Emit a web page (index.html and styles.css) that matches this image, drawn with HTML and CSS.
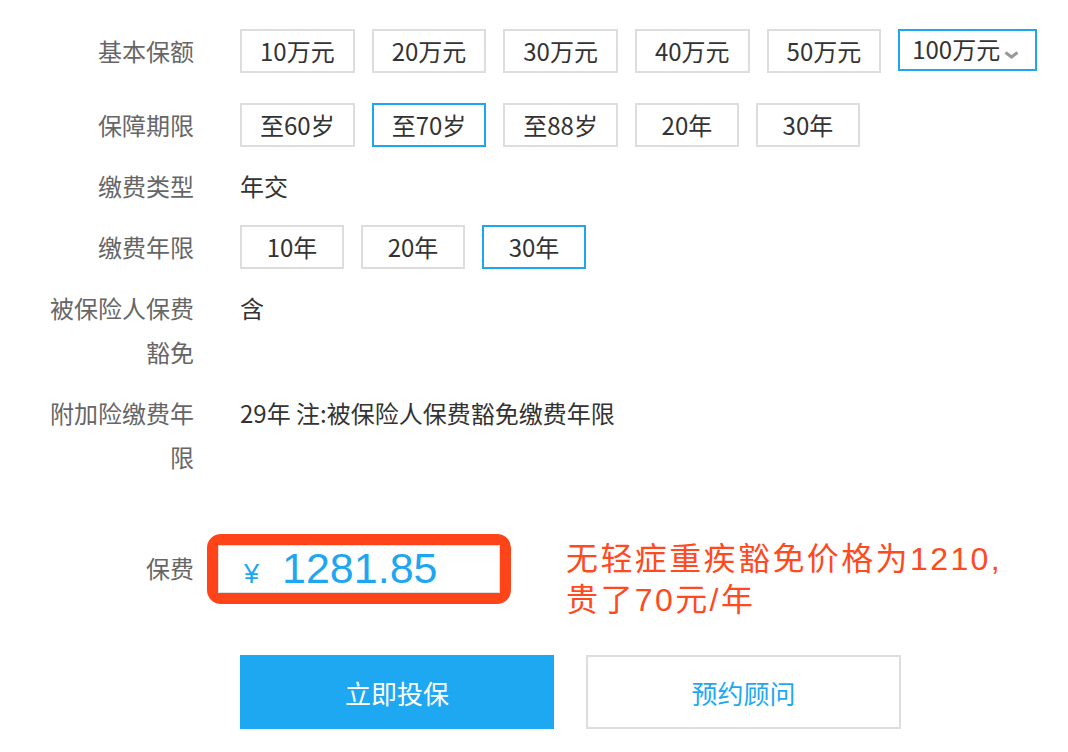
FILE: index.html
```html
<!DOCTYPE html>
<html lang="zh-Hans-CN">
<head>
    <meta charset="UTF-8">
    <title>保费试算</title>
    <link rel="stylesheet" href="styles.css">
</head>
<body>

    <!--投保选项-->
    <div class="form">
        <div class="row row-first">
            <div class="label">基本保额</div>
            <div class="value">
                <span class="opt">10万元</span>
                <span class="opt">20万元</span>
                <span class="opt">30万元</span>
                <span class="opt">40万元</span>
                <span class="opt">50万元</span>
                <span class="opt opt-drop on">
                    <span>100万元</span>
                    <svg width="15" height="8" viewBox="0 0 15 8"><path d="M1.5 1.5 L7.5 6 L13.5 1.5" fill="none" stroke="#999" stroke-width="3"/></svg>
                </span>
            </div>
        </div>
        <div class="row">
            <div class="label">保障期限</div>
            <div class="value">
                <span class="opt">至60岁</span>
                <span class="opt on">至70岁</span>
                <span class="opt">至88岁</span>
                <span class="opt">20年</span>
                <span class="opt">30年</span>
            </div>
        </div>
        <div class="row">
            <div class="label">缴费类型</div>
            <div class="value">年交</div>
        </div>
        <div class="row">
            <div class="label">缴费年限</div>
            <div class="value">
                <span class="opt">10年</span>
                <span class="opt">20年</span>
                <span class="opt on">30年</span>
            </div>
        </div>
        <div class="row">
            <div class="label">被保险人保费豁免</div>
            <div class="value">含</div>
        </div>
        <div class="row">
            <div class="label">附加险缴费年限</div>
            <div class="value">29年 注:被保险人保费豁免缴费年限</div>
        </div>

        <!--保费-->
        <div class="row row-price">
            <div class="label">保费</div>
            <div class="price-mark">
                <div class="price-box"><span class="yen">¥</span><span class="num">1281.85</span></div>
            </div>
            <div class="note">
                <p>无轻症重疾豁免价格为1210,</p>
                <p>贵了70元/年</p>
            </div>
        </div>

        <div class="actions">
            <a class="btn btn-primary" href="javascript:void(0);">立即投保</a>
            <a class="btn btn-ghost" href="javascript:void(0);">预约顾问</a>
        </div>
    </div>

</body>
</html>
```

FILE: styles.css
```css
/*reset*/
body, p {
    margin: 0;
    padding: 0;
}
body {
    background-color: #fff;
    color: #333;
    font-family: "Noto Sans CJK SC", sans-serif;
}
a {
    text-decoration: none;
}

/*投保选项*/
.form {
    padding-top: 29px;
}
.row {
    display: flex;
    align-items: flex-start;
    margin-bottom: 17px;
}
.row-first {
    margin-bottom: 30px;
}
.label {
    flex: none;
    width: 145px;
    margin-left: 49px;
    text-align: right;
    font-size: 24px;
    line-height: 44px;
    color: #666;
}
.value {
    display: flex;
    flex-wrap: wrap;
    gap: 0 17px;
    margin-left: 46px;
    font-size: 24px;
    line-height: 44px;
}
.opt {
    box-sizing: border-box;
    min-width: 104px;
    height: 44px;
    padding: 0 18px;
    border: 2px solid #ddd;
    text-align: center;
    line-height: 40px;
    cursor: pointer;
}
.opt.on {
    border-color: #1ea7f0;
}
.opt-drop {
    display: flex;
    align-items: flex-start;
    height: 42px;
    padding: 0 16px 0 12px;
    line-height: 36px;
}
.opt-drop svg {
    margin: 20px 0 0 4px;
}

/*保费*/
.row-price {
    margin-top: 55px;
}
.row-price .label {
    margin-top: 12px;
}
.price-mark {
    margin-left: 13px;
    border: 11px solid #ff4419;
    border-radius: 14px;
}
.price-box {
    box-sizing: border-box;
    width: 282px;
    height: 48px;
    padding-left: 25px;
    border: 1px solid #ddd;
    color: #1ea7f0;
    font-family: "Liberation Sans", "Noto Sans CJK SC", sans-serif;
    line-height: 45px;
    white-space: nowrap;
}
.price-box .yen {
    font-size: 27px;
}
.price-box .num {
    margin-left: 23px;
    font-size: 43px;
}
.note {
    margin: 5px 0 0 55px;
    font-family: "Liberation Sans", "Noto Sans CJK SC", sans-serif;
    font-size: 32px;
    line-height: 41px;
    letter-spacing: 2.4px;
    color: #ff4a1f;
    white-space: nowrap;
}

.actions {
    display: flex;
    gap: 32px;
    margin: 34px 0 0 240px;
}
.btn {
    box-sizing: border-box;
    display: flex;
    justify-content: center;
    align-items: center;
    width: 314px;
    height: 74px;
    font-size: 26px;
}
.btn-primary {
    background-color: #1ea8f2;
    color: #fff;
}
.btn-ghost {
    width: 315px;
    border: 2px solid #ddd;
    color: #1ea8f2;
}
```
